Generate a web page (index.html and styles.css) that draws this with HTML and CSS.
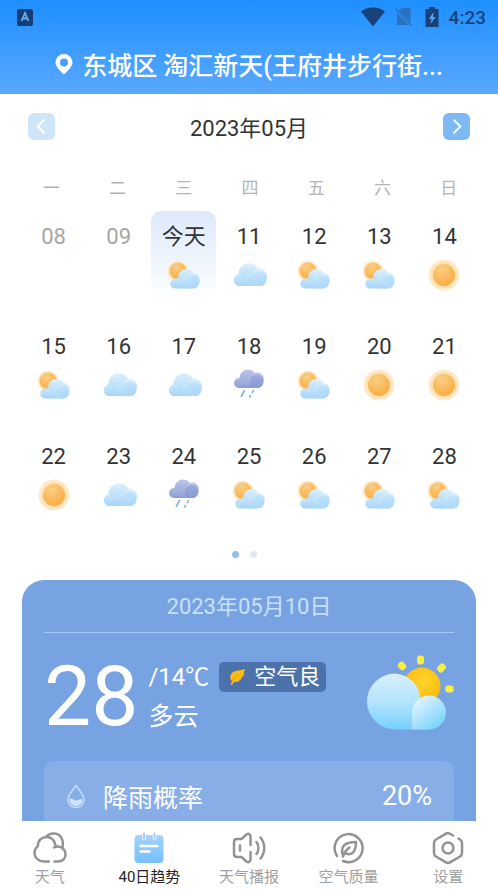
FILE: index.html
```html
<!DOCTYPE html>
<html lang="zh-CN">
<head>
    <meta charset="UTF-8">
    <meta name="viewport" content="width=device-width, initial-scale=1.0">
    <title>40日趋势</title>
    <link rel="stylesheet" href="styles.css">
</head>
<body>
    <!-- shared weather icons -->
    <svg class="sprite" aria-hidden="true">
        <defs>
            <linearGradient id="cloudFill" x1="0" y1="0" x2="0" y2="1">
                <stop offset="0" stop-color="#dcf0fd"/>
                <stop offset="1" stop-color="#a5d4f8"/>
            </linearGradient>
            <linearGradient id="puffFill" x1="0" y1="0" x2="1" y2="1">
                <stop offset="0" stop-color="#c3e3fb"/>
                <stop offset="1" stop-color="#a8d6f9"/>
            </linearGradient>
            <linearGradient id="rainFill" x1="0" y1="0" x2="0" y2="1">
                <stop offset="0" stop-color="#bdc8ea"/>
                <stop offset="1" stop-color="#8b9dd2"/>
            </linearGradient>
            <radialGradient id="sunFill" cx="0.4" cy="0.25" r="0.8">
                <stop offset="0" stop-color="#f9ce85"/>
                <stop offset="1" stop-color="#fbab3d"/>
            </radialGradient>
        </defs>
        <symbol id="sunny" viewBox="0 0 36 36">
            <circle cx="18" cy="18" r="15.5" fill="#fdeacb"/>
            <circle cx="18" cy="18" r="13" fill="#fde1b4"/>
            <circle cx="18" cy="18" r="11" fill="url(#sunFill)"/>
        </symbol>
        <symbol id="cloudy" viewBox="1 1 34 34">
            <circle cx="18" cy="17" r="10" fill="url(#cloudFill)"/>
            <path d="M7.500 17.500a6 6 0 0 1 6 5.500c1-4 4-6 7.500-6.500a7 7 0 0 1 13.500 5.500c0 4-3 6.500-6.500 6.500H8a5.800 5.800 0 0 1-.5-11z" fill="url(#cloudFill)"/>
            <path d="M20 23a7.200 7.200 0 0 1 14.500-1c0 4-3 6.500-6.500 6.500H15c3 0 5-2.500 5-5.500z" fill="url(#puffFill)" opacity="0.7"/>
        </symbol>
        <symbol id="partly" viewBox="1 0 36 36">
            <circle cx="13" cy="14" r="10.500" fill="#fdeacb"/>
            <circle cx="13" cy="14" r="8.500" fill="url(#sunFill)"/>
            <circle cx="21.500" cy="20.500" r="8.500" fill="url(#cloudFill)"/>
            <path d="M10 21.500a5 5 0 0 1 6 3c2-4 4-5.500 7.500-5.500a6 6 0 0 1 11 4.500c0 5-3 8-7 8H10.500a5 5 0 0 1-.5-10z" fill="url(#cloudFill)"/>
            <path d="M21 25a6.800 6.800 0 0 1 13.500-1c0 4.500-3 7.500-7 7.500H16c3 0 5-3 5-6.500z" fill="url(#puffFill)" opacity="0.7"/>
        </symbol>
        <symbol id="rainy" viewBox="1 0 36 36">
            <circle cx="18" cy="11" r="8.500" fill="url(#rainFill)"/>
            <path d="M9 11a5 5 0 0 1 5 3.500c1.500-3.500 4-4.500 7-4.500a6 6 0 0 1 12.500 4c0 4-2.500 7-6 7H9a5 5 0 0 1 0-10z" fill="url(#rainFill)"/>
            <path d="M20 15a6.500 6.500 0 0 1 13.500-1c0 4-2.500 7-6 7H15c3 0 5-3 5-6z" fill="#8798d3" opacity="0.55"/>
            <path d="M14.500 23.500l-3.200 6M23.500 23.500l-1.200 2.200M20.500 28.500l-.8 1.500" stroke="#86b4d8" stroke-width="1.600" stroke-linecap="round"/>
        </symbol>
    </svg>

    <header class="top">
        <div class="status">
            <svg class="status-app" viewBox="0 0 16 17" aria-hidden="true">
                <rect width="16" height="17" rx="2" fill="#123f76"/>
                <path d="M4.500 12L8 4l3.500 8M6 9.500h4" fill="none" stroke="#6eabec" stroke-width="1.800"/>
            </svg>
            <svg class="status-wifi" viewBox="0 0 24 20" aria-hidden="true">
                <path d="M0 4.500C6-.8 18-.8 24 4.500L12 19.500z" fill="#17437a"/>
            </svg>
            <svg class="status-sim" viewBox="0 0 18 20" aria-hidden="true">
                <path d="M7 1h8.500v14.500L4 4z" fill="#2b70bf"/>
                <path d="M2 6v12h12z" fill="#2b70bf"/>
                <path d="M.5 1.500l16 17" stroke="#2b70bf" stroke-width="1.500"/>
            </svg>
            <svg class="status-battery" viewBox="0 0 14 20" aria-hidden="true">
                <path d="M4 0h6v2h3.500v18H.5V2H4z" fill="#17437a"/>
                <path d="M8.500 5L4 12h2.500L5.500 17l5-7H8z" fill="#5da6f5"/>
            </svg>
            <span class="status-time">4:23</span>
        </div>
        <h1 class="place">
            <svg class="place-pin" viewBox="0 0 18 22" aria-hidden="true">
                <path fill-rule="evenodd" d="M9 1a8.500 8.500 0 0 0-8.500 8.500C.5 14 5.500 18 9 21.500 12.500 18 17.500 14 17.500 9.500A8.500 8.500 0 0 0 9 1zm0 4.500a4 4 0 1 1 0 8 4 4 0 0 1 0-8z" fill="#fff"/>
            </svg>
            <span>东城区 淘汇新天(王府井步行街...</span>
        </h1>
    </header>

    <main class="content">
        <div class="month">
            <button type="button" class="month-btn" disabled aria-label="上个月">
                <svg viewBox="0 0 28 28"><path d="M17 7l-7 7 7 7"/></svg>
            </button>
            <h2>2023年05月</h2>
            <button type="button" class="month-btn" aria-label="下个月">
                <svg viewBox="0 0 28 28"><path d="M11 7l7 7-7 7"/></svg>
            </button>
        </div>

        <table class="calendar">
            <thead>
                <tr><th>一</th><th>二</th><th>三</th><th>四</th><th>五</th><th>六</th><th>日</th></tr>
            </thead>
            <tbody>
                <tr>
                    <td><button type="button" class="day past">08</button></td>
                    <td><button type="button" class="day past">09</button></td>
                    <td><button type="button" class="day today">今天<svg><use href="#partly"/></svg></button></td>
                    <td><button type="button" class="day">11<svg><use href="#cloudy"/></svg></button></td>
                    <td><button type="button" class="day">12<svg><use href="#partly"/></svg></button></td>
                    <td><button type="button" class="day">13<svg><use href="#partly"/></svg></button></td>
                    <td><button type="button" class="day">14<svg><use href="#sunny"/></svg></button></td>
                </tr>
                <tr>
                    <td><button type="button" class="day">15<svg><use href="#partly"/></svg></button></td>
                    <td><button type="button" class="day">16<svg><use href="#cloudy"/></svg></button></td>
                    <td><button type="button" class="day">17<svg><use href="#cloudy"/></svg></button></td>
                    <td><button type="button" class="day">18<svg><use href="#rainy"/></svg></button></td>
                    <td><button type="button" class="day">19<svg><use href="#partly"/></svg></button></td>
                    <td><button type="button" class="day">20<svg><use href="#sunny"/></svg></button></td>
                    <td><button type="button" class="day">21<svg><use href="#sunny"/></svg></button></td>
                </tr>
                <tr>
                    <td><button type="button" class="day">22<svg><use href="#sunny"/></svg></button></td>
                    <td><button type="button" class="day">23<svg><use href="#cloudy"/></svg></button></td>
                    <td><button type="button" class="day">24<svg><use href="#rainy"/></svg></button></td>
                    <td><button type="button" class="day">25<svg><use href="#partly"/></svg></button></td>
                    <td><button type="button" class="day">26<svg><use href="#partly"/></svg></button></td>
                    <td><button type="button" class="day">27<svg><use href="#partly"/></svg></button></td>
                    <td><button type="button" class="day">28<svg><use href="#partly"/></svg></button></td>
                </tr>
            </tbody>
        </table>

        <div class="dots">
            <span class="dot active"></span>
            <span class="dot"></span>
        </div>

        <section class="card">
            <h3 class="card-date">2023年05月10日</h3>
            <div class="summary">
                <span class="high">28</span>
                <div class="summary-text">
                    <div class="summary-line">
                        <span class="low">/14℃</span>
                        <span class="air">
                            <svg viewBox="0 0 18 18" aria-hidden="true">
                                <path d="M2.500 16.500L4 13C1 10 2 5.500 6 3.500c3.500-1.500 7-1 11.500-2.500-1.500 2-1.500 4-2 5.500l1 .5-2 1.500C13 12 10 14.500 6 14l-2 3z" fill="#fdbb13"/>
                                <path d="M4 13.500c2-3.500 4-5.500 6.500-7" fill="none" stroke="#c79a2a" stroke-width="0.800"/>
                            </svg>
                            空气良
                        </span>
                    </div>
                    <div>多云</div>
                </div>
                <svg class="summary-icon" viewBox="0 0 88 76" aria-hidden="true">
                    <defs>
                        <linearGradient id="bigCloud" x1="0" y1="0" x2="0" y2="1">
                            <stop offset="0" stop-color="#d9f0fe"/>
                            <stop offset="0.500" stop-color="#b5e4fd"/>
                            <stop offset="1" stop-color="#74d2fc"/>
                        </linearGradient>
                        <linearGradient id="smallCloud" x1="0.100" y1="0.200" x2="0.700" y2="1">
                            <stop offset="0" stop-color="#dcf2fe"/>
                            <stop offset="1" stop-color="#78d3fc"/>
                        </linearGradient>
                        <radialGradient id="bigSun" cx="0.550" cy="0.350" r="0.650">
                            <stop offset="0" stop-color="#ffd529"/>
                            <stop offset="1" stop-color="#fcb70c"/>
                        </radialGradient>
                    </defs>
                    <circle cx="56" cy="31" r="18.500" fill="url(#bigSun)"/>
                    <g fill="#f8ee45">
                        <rect x="-3.500" y="-4.200" width="7" height="8.400" rx="3" transform="translate(36 11) rotate(-38)"/>
                        <rect x="-3.500" y="-4.500" width="7" height="9" rx="3" transform="translate(54.500 5)"/>
                        <rect x="-3.500" y="-4.500" width="7" height="9" rx="3" transform="translate(75.500 13) rotate(42)"/>
                        <rect x="-4.200" y="-3.500" width="8.400" height="7" rx="3" transform="translate(83.500 34)"/>
                    </g>
                    <path d="M29 18.500A27 27 0 0 1 54.500 43L63 74.500H29a28 28 0 0 1 0-56z" fill="url(#bigCloud)"/>
                    <path d="M46 65V57.500a17 17 0 1 1 17 17H46z" fill="url(#smallCloud)"/>
                </svg>
            </div>
            <dl class="details">
                <div class="detail">
                    <dt>
                        <svg viewBox="0 0 18 24" aria-hidden="true">
                            <path d="M9 1.500C6 6 1 10.500 1 15.500a8 8 0 0 0 16 0C17 10.500 12 6 9 1.500z" fill="none" stroke="#c3dcfa" stroke-width="1.500"/>
                            <path d="M2.500 15c2.500-1.500 4.500 2 7 1.500s3-2 6-1.500a6.500 6.500 0 0 1-13 1z" fill="#d5e0fb"/>
                        </svg>
                        降雨概率
                    </dt>
                    <dd>20%</dd>
                </div>
            </dl>
        </section>
    </main>

    <nav class="tabs">
        <a href="#weather" class="tab">
            <svg viewBox="0 0 34 34" aria-hidden="true">
                <path d="M16 30.500h-5.500c-5 0-9-4-9-8.500 0-3 1.500-5.500 3.500-7C4.500 9.500 9 6 13.500 6c4.500 0 8 3 9 8.500"/>
                <path d="M21.500 30.500h4a7 7 0 0 0 7-7.500c0-4-3.500-7.500-7.500-7.500-1.500 0-3 .5-4 1"/>
                <path d="M13 6c2-2.500 5-3.800 8.500-3.500 6 .5 9.500 6 8 14"/>
            </svg>
            天气
        </a>
        <a href="#trend" class="tab active" aria-current="page">
            <svg viewBox="0 0 34 34" aria-hidden="true">
                <defs>
                    <linearGradient id="noteFill" x1="0" y1="0" x2="0" y2="1">
                        <stop offset="0" stop-color="#a6d2fc"/>
                        <stop offset="1" stop-color="#75c0fb"/>
                    </linearGradient>
                </defs>
                <rect x="2.500" y="4" width="29" height="28" rx="4" fill="url(#noteFill)" stroke="none"/>
                <path d="M12 1.500v6M22.500 1.500v6" stroke="#fff" stroke-width="3.500"/>
                <path d="M12 2.500v5M22.500 2.500v5" stroke="#9fcdf8" stroke-width="2"/>
                <path d="M8.500 15h17M8.500 20.500h9" stroke="#fff"/>
            </svg>
            40日趋势
        </a>
        <a href="#report" class="tab">
            <svg viewBox="0 0 34 34" aria-hidden="true">
                <path d="M18.500 14V6c0-3-2-4-4-2.500L9.500 8H5C3 8 2 9 2 11v12c0 2 1 3 3 3h4.500l5 4.500c2 1.500 4 .5 4-2.500v-7M8 14.500v5M24.500 11c2.500 3.500 2.500 8.500 0 12M28.500 6.500c5 6 5 15 0 21"/>
            </svg>
            天气播报
        </a>
        <a href="#air" class="tab">
            <svg viewBox="0 0 34 34" aria-hidden="true">
                <path d="M5 25A14 14 0 1 1 11 30M11 24.500c-3-9 1.500-13.500 13-13.500 0 9-3.500 14-10 11.500M11 25.500c1-4 3-6.500 6.500-9"/>
            </svg>
            空气质量
        </a>
        <a href="#settings" class="tab">
            <svg viewBox="0 0 34 34" aria-hidden="true">
                <path d="M22 4.500l-3-1.800a4 4 0 0 0-4 0L5 8.500a4 4 0 0 0-2 3.500v10a4 4 0 0 0 2 3.500l10 5.800a4 4 0 0 0 4 0l10-5.800a4 4 0 0 0 2-3.500V12a4 4 0 0 0-2-3.500l-1.500-1"/>
                <circle cx="17" cy="17" r="5.500"/>
            </svg>
            设置
        </a>
    </nav>
</body>
</html>
```
FILE: styles.css
```css
* {
    box-sizing: border-box;
}
body {
    margin: 0;
    height: 100vh;
    display: flex;
    flex-direction: column;
    background-color: #fff;
    color: #333;
    font-family: Roboto, "Noto Sans CJK SC", sans-serif;
    font-size: 22px;
}
h1, h2, h3, dl, dd {
    margin: 0;
    font-weight: normal;
}
button {
    padding: 0;
    border: none;
    background: none;
    color: inherit;
    font: inherit;
    cursor: pointer;
}
svg {
    display: block;
    flex: none;
}
.sprite {
    position: absolute;
    width: 0;
    height: 0;
}

/* header */
.top {
    flex: none;
    background: linear-gradient(#1e8fff, #5aa8ff);
}
.status {
    display: flex;
    align-items: center;
    height: 34px;
    padding: 0 12px 0 17px;
    color: #17437a;
}
.status-app {
    width: 16px;
    height: 17px;
    margin-right: auto;
}
.status-wifi {
    width: 24px;
    height: 20px;
}
.status-sim {
    width: 18px;
    height: 20px;
    margin: 0 12px 0 10px;
}
.status-battery {
    width: 14px;
    height: 20px;
}
.status-time {
    margin-left: 10px;
    font-size: 19px;
    font-weight: 500;
}
.place {
    display: flex;
    justify-content: center;
    align-items: center;
    gap: 9px;
    height: 60px;
    color: #fff;
    font-size: 25px;
    font-weight: 500;
    white-space: nowrap;
}
.place-pin {
    width: 18px;
    height: 22px;
}

/* calendar */
.content {
    flex: 1;
    min-height: 0;
    overflow: hidden;
}
.month {
    display: flex;
    justify-content: space-between;
    align-items: center;
    height: 64px;
    padding: 0 28px;
}
.month h2 {
    font-size: 22px;
}
.month-btn {
    border-radius: 6px;
    background-color: #7dbaf5;
}
.month-btn:disabled {
    background-color: #cfe5fa;
    cursor: default;
}
.month-btn svg {
    width: 27px;
    height: 27px;
    fill: none;
    stroke: #fff;
    stroke-width: 2;
}
.calendar,
.calendar thead,
.calendar tbody {
    display: block;
}
.calendar tr {
    display: grid;
    grid-template-columns: repeat(7, 1fr);
    padding: 0 21px;
}
.calendar thead tr {
    padding: 0 16px 0 18px;
}
.calendar th {
    height: 53px;
    padding: 0;
    line-height: 60px;
    color: #b4b4b4;
    font-size: 17px;
    font-weight: normal;
}
.calendar td {
    height: 110px;
    padding: 0;
}
.day {
    display: flex;
    flex-direction: column;
    align-items: center;
    width: 100%;
    height: 90px;
    padding-top: 6px;
    border-radius: 10px;
    line-height: 40px;
}
.day svg {
    width: 36px;
    height: 36px;
}
.past {
    color: #a6a6a6;
}
.today {
    background: linear-gradient(#dce9fa, #fff);
}
.dots {
    display: flex;
    justify-content: center;
    gap: 11px;
    padding: 10px 10px 22px 0;
}
.dot {
    width: 7px;
    height: 7px;
    border-radius: 50%;
    background-color: #dde9f8;
}
.dot.active {
    background-color: #8fc1ee;
}

/* day card */
.card {
    margin: 0 22px;
    padding: 2px 22px 0;
    border-radius: 22px 22px 0 0;
    background-color: #78a3e2;
    color: #fff;
}
.card-date {
    border-bottom: 1px solid #a7c8f2;
    color: #c9e0fb;
    font-size: 22px;
    line-height: 50px;
    text-align: center;
}
.summary {
    display: flex;
    align-items: center;
    height: 128px;
}
.high {
    font-size: 84px;
    line-height: 128px;
}
.summary-text {
    margin-left: 10px;
    font-size: 25px;
    line-height: 40px;
}
.summary-line {
    display: flex;
    align-items: center;
    gap: 10px;
}
.low {
    font-size: 24px;
}
.air {
    display: flex;
    align-items: center;
    gap: 8px;
    height: 30px;
    padding: 0 6px 0 9px;
    border-radius: 5px;
    background-color: #4b72aa;
    font-size: 22px;
}
.air svg {
    width: 18px;
    height: 18px;
}
.summary-icon {
    align-self: flex-start;
    width: 88px;
    height: 76px;
    margin: 22px 0 0 auto;
}
.details {
    border-radius: 10px 10px 0 0;
    background-color: #88aee8;
}
.detail {
    display: flex;
    justify-content: space-between;
    align-items: center;
    height: 70px;
    padding: 0 22px;
}
.detail dt {
    display: flex;
    align-items: center;
    gap: 17px;
    font-size: 25px;
}
.detail dt svg {
    width: 20px;
    height: 24px;
}
.detail dd {
    font-size: 27px;
}

/* bottom tabs */
.tabs {
    flex: none;
    display: grid;
    grid-template-columns: repeat(5, 1fr);
    height: 69px;
    padding-top: 10px;
    background-color: #fff;
}
.tab {
    display: flex;
    flex-direction: column;
    align-items: center;
    color: #a0a0a0;
    font-size: 15px;
    line-height: 25px;
    text-decoration: none;
}
.tab svg {
    width: 34px;
    height: 34px;
    fill: none;
    stroke: #939393;
    stroke-width: 2.5;
    stroke-linecap: round;
    stroke-linejoin: round;
}
.tab.active {
    color: #222;
}
```
